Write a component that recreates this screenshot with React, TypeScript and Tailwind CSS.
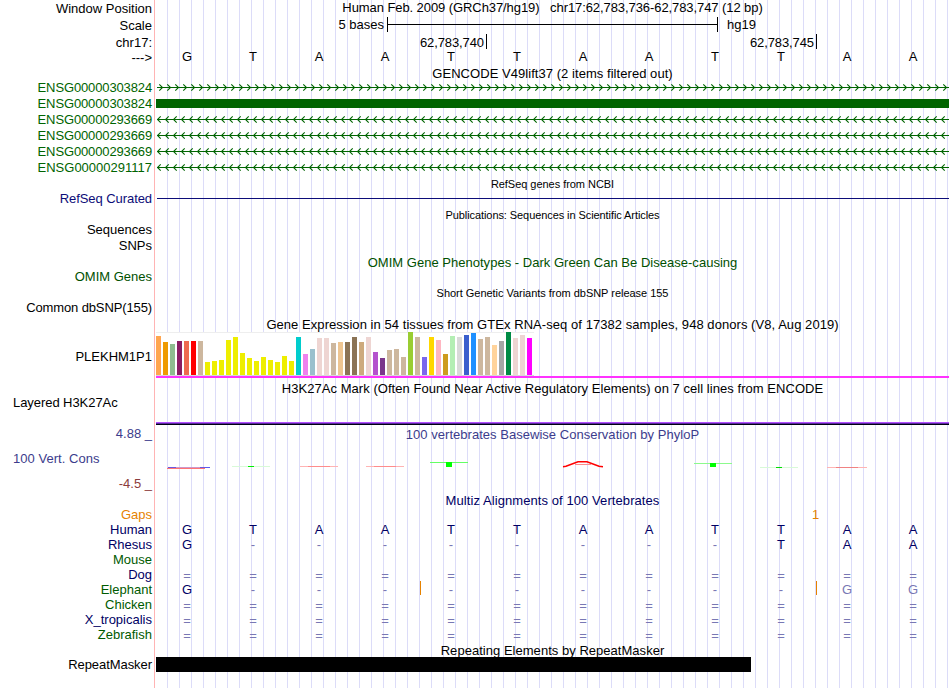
const labels = [
  { text: 'Window Position', className: 'mt-px' },
  { text: 'Scale', className: 'mt-0.5' },
  { text: 'chr17:', className: 'mt-0.5' },
  { text: '--->', className: '' },
  { text: 'ENSG00000303824', className: 'mt-[15px] tracking-[-0.13px] text-[#006400]' },
  { text: 'ENSG00000303824', className: 'mt-px tracking-[-0.13px] text-[#006400]' },
  { text: 'ENSG00000293669', className: 'mt-px tracking-[-0.13px] text-[#006400]' },
  { text: 'ENSG00000293669', className: 'mt-px tracking-[-0.13px] text-[#006400]' },
  { text: 'ENSG00000293669', className: 'mt-px tracking-[-0.13px] text-[#006400]' },
  { text: 'ENSG00000291117', className: 'mt-px text-[#006400]' },
  { text: 'RefSeq Curated', className: 'mt-4 tracking-[-0.07px] text-[#0c0c78]' },
  { text: 'Sequences', className: 'mt-4' },
  { text: 'SNPs', className: 'mt-px' },
  { text: 'OMIM Genes', className: 'mt-4 text-[#005000]' },
  { text: 'Common dbSNP(155)', className: 'mt-4 tracking-[-0.12px]' },
  { text: 'PLEKHM1P1', className: 'mt-[34px]' },
  { text: 'Layered H3K27Ac', className: 'mt-[31px] self-start pl-[13px] tracking-[-0.06px]' },
  { text: '4.88 _', className: 'mt-4 text-[#3c3c8c]' },
  { text: '100 Vert. Cons', className: 'mt-2.5 self-start pl-[13px] tracking-[0.04px] text-[#3c3c8c]' },
  { text: '-4.5 _', className: 'mt-2.5 text-[#8c3c3c]' },
  { text: 'Gaps', className: 'mt-4 text-[#e68200]' },
  { text: 'Human', className: 'text-[#000064]' },
  { text: 'Rhesus', className: 'text-[#000064]' },
  { text: 'Mouse', className: 'text-[#005a00]' },
  { text: 'Dog', className: 'text-[#000064]' },
  { text: 'Elephant', className: 'text-[#005a00]' },
  { text: 'Chicken', className: 'text-[#005a00]' },
  { text: 'X_tropicalis', className: 'text-[#000064]' },
  { text: 'Zebrafish', className: 'text-[#005a00]' },
  { text: 'RepeatMasker', className: 'mt-[15px] tracking-[-0.06px]' },
]

const tissues: [number, string][] = [
  [39, '#ffa54f'], [33, '#ee9a00'], [31, '#8fbc8f'], [34, '#8b1c62'], [34, '#ee6a50'], [34, '#ff0000'],
  [34, '#cdb79e'], [13, '#eeee00'], [14, '#eeee00'], [15, '#eeee00'], [35, '#eeee00'], [38, '#eeee00'],
  [22, '#eeee00'], [17, '#eeee00'], [14, '#eeee00'], [18, '#eeee00'], [15, '#eeee00'], [13, '#eeee00'],
  [19, '#eeee00'], [14, '#eeee00'], [38, '#00cdcd'], [21, '#ee82ee'], [26, '#9ac0cd'], [37, '#eed5d2'],
  [37, '#eed5d2'], [32, '#cdb79e'], [33, '#eec591'], [33, '#8b7355'], [38, '#8b7355'], [33, '#cdaa7d'],
  [38, '#eed5d2'], [23, '#b452cd'], [17, '#7a378b'], [25, '#cdb79e'], [26, '#cdb79e'], [18, '#cdb79e'],
  [43, '#9acd32'], [38, '#cdb79e'], [18, '#7a67ee'], [38, '#ffd700'], [35, '#ffb6c1'], [21, '#cd9b1d'],
  [39, '#b4eeb4'], [38, '#d9d9d9'], [40, '#3a5fcd'], [42, '#1e90ff'], [36, '#cdb79e'], [38, '#cdb79e'],
  [30, '#ffd39b'], [34, '#a6a6a6'], [43, '#008b45'], [37, '#eed5d2'], [40, '#eed5d2'], [37, '#ff00ff'],
]

// Mouse has no alignment in this window
const alignments = ['GTAATTAATTAA', 'G--------TAA', '', '============', 'G---------gg', '============', '============', '============']

function Bases({ seq, className }: { seq: string; className: string }) {
  return (
    <div className={`-ml-0.5 grid h-[15px] w-[792px] grid-cols-12 text-center ${className}`}>
      {seq.split('').map((base, i) => (
        <span key={i} className={base === '=' ? 'pt-px text-[#7878b4]' : /[-g]/.test(base) ? 'text-[#7878b4]' : ''}>
          {base.toUpperCase()}
        </span>
      ))}
    </div>
  )
}

function Genes() {
  return (
    <svg className="mt-0.5 block h-[93px] w-[793px]" viewBox="156 83 793 93">
      <defs>
        <pattern id="fwd" x="157" y="83" width="8" height="9" patternUnits="userSpaceOnUse">
          <path d="M2.3 1.3 L5.5 4.5 L2.3 7.7" fill="none" stroke="#006400" strokeWidth="1.1" />
        </pattern>
        <pattern id="rev" x="157" y="115" width="8" height="16" patternUnits="userSpaceOnUse">
          <path d="M3.7 1.3 L0.5 4.5 L3.7 7.7" fill="none" stroke="#006400" strokeWidth="1.1" />
        </pattern>
      </defs>
      <rect x="157" y="83" width="792" height="9" fill="url(#fwd)" />
      <rect x="157" y="87" width="792" height="1" fill="#006400" />
      <rect x="156" y="99" width="793" height="9" fill="#006400" />
      <rect x="157" y="115" width="792" height="61" fill="url(#rev)" />
      {[119, 135, 151, 167].map((y) => (
        <rect key={y} x="157" y={y} width="792" height="1" fill="#006400" />
      ))}
    </svg>
  )
}

function Conservation() {
  return (
    <svg className="block h-[51px] w-[793px]" viewBox="156 442 793 51">
      <path d="M168 467.5H176M200 467.5H210" stroke="#5a5af0" />
      <path d="M176 467.5H200" stroke="#c8a0d8" />
      <path d="M167 468.4H205" stroke="#ff6464" />
      <path d="M232 466.5H270" stroke="#d8fad8" />
      <path d="M248 466.5H254" stroke="#00f000" />
      <path d="M300 466.5H338M366 466.5H404" stroke="#ffb4b4" />
      <path d="M308 466.5H330M374 466.5H396" stroke="#ff8c8c" />
      <path d="M430 462.5H468" stroke="#64ff64" />
      <path d="M446 462H452V467H446Z" fill="#00ff00" />
      <path d="M563 466.7L566 466.3L578 461.8H587L599 466.3L603 466.7" fill="none" stroke="#ff0000" strokeWidth="1.6" />
      <path d="M575 464.5H591" stroke="#ff8c8c" />
      <path d="M694 463.5H732" stroke="#8cfa8c" />
      <path d="M710 463H716V467H710Z" fill="#00ff00" />
      <path d="M760 467.5H798" stroke="#d8fad8" />
      <path d="M776 467.5H782" stroke="#00dc00" />
      <path d="M827 467.5H867" stroke="#ffb4b4" />
      <path d="M836 467.5H858" stroke="#f08282" />
    </svg>
  )
}

export default function App() {
  return (
    <div className="flex h-[688px] w-[950px] overflow-hidden bg-white font-['Liberation_Sans',Arial,sans-serif] text-[13px] leading-[15px] whitespace-pre text-black">
      <div className="flex w-[154px] shrink-0 flex-col items-end pr-0.5">
        {labels.map((label, i) => (
          <div key={i} className={`h-[15px] shrink-0 ${label.className}`}>
            {label.text}
          </div>
        ))}
      </div>
      <div className="mr-px w-px shrink-0 bg-[#ffb4b4]" />

      <div className="w-[793px] shrink-0 bg-[repeating-linear-gradient(90deg,transparent_0,transparent_11px,#dcdcf8_11px,#dcdcf8_12px)]">
        <div className="h-[15px] text-center tracking-[-0.08px]">
          Human Feb. 2009 (GRCh37/hg19)   chr17:62,783,736-62,783,747 (12 bp)
        </div>
        <div className="mt-0.5 flex h-[15px]">
          <span className="w-[228px] text-right">5 bases</span>
          <div className="ml-[3px] flex w-[331px] items-center border-x border-black">
            <div className="h-px w-full bg-black" />
          </div>
          <span className="ml-[9px]">hg19</span>
        </div>
        <div className="mt-0.5 flex h-[15px]">
          <span className="w-[331px] border-r border-black pt-px pr-0.5 text-right tracking-[-0.1px]">62,783,740</span>
          <span className="w-[330px] border-r border-black pt-px pr-0.5 text-right tracking-[-0.1px]">62,783,745</span>
        </div>
        <Bases seq="GTAATTAATTAA" className="" />
        <div className="mt-0.5 h-[15px] text-center tracking-[0.05px]">GENCODE V49lift37 (2 items filtered out)</div>
        <Genes />

        <div className="mt-0.5 h-[13px] text-center text-[11px] leading-[13px] tracking-[-0.04px]">
          RefSeq genes from NCBI
        </div>
        <div className="mt-[7px] ml-px h-px bg-[#0c0c78]" />
        <div className="mt-2.5 h-[13px] text-center text-[11px] leading-[13px] tracking-[-0.08px]">
          Publications: Sequences in Scientific Articles
        </div>
        <div className="mt-[33px] h-[15px] text-center tracking-[0.02px] text-[#005000]">
          OMIM Gene Phenotypes - Dark Green Can Be Disease-causing
        </div>
        <div className="mt-[17px] h-[13px] text-center text-[11px] leading-[13px] tracking-[-0.03px]">
          Short Genetic Variants from dbSNP release 155
        </div>

        <div className="mt-[17px] h-[15px] text-center tracking-[0.055px]">
          Gene Expression in 54 tissues from GTEx RNA-seq of 17382 samples, 948 donors (V8, Aug 2019)
        </div>
        <div className="flex h-11 w-[378px] items-end gap-0.5 border-y border-t-[#eeeeee] border-b-[#d8d8d8] bg-white">
          {tissues.map(([height, color], i) => (
            <div key={i} className="w-[5px] shrink-0" style={{ height, backgroundColor: color }} />
          ))}
        </div>
        <div className="h-0.5 bg-[#ff32ff]" />

        <div className="mt-[3px] h-[15px] text-center tracking-[0.045px]">
          H3K27Ac Mark (Often Found Near Active Regulatory Elements) on 7 cell lines from ENCODE
        </div>
        <div className="mt-[26px] h-px bg-[#b450ff]" />
        <div className="h-px bg-[#5a28a0]" />
        <div className="h-px bg-[#000014]" />

        <div className="mt-0.5 h-[15px] text-center tracking-[0.03px] text-[#3c3c8c]">
          100 vertebrates Basewise Conservation by PhyloP
        </div>
        <Conservation />

        <div className="h-3.5 text-center tracking-[0.08px] text-[#000064]">Multiz Alignments of 100 Vertebrates</div>
        <div className="h-[15px] pl-[656px] text-[#e68200]">1</div>
        {alignments.map((seq, i) => (
          <div key={i} className="relative h-[15px]">
            <Bases seq={seq} className="text-[#000064]" />
            {i === 4 && (
              <>
                <div className="absolute top-[-1px] left-[264px] h-3.5 w-px bg-[#e68200]" />
                <div className="absolute top-[-1px] left-[660px] h-3.5 w-px bg-[#e68200]" />
              </>
            )}
          </div>
        ))}

        <div className="mt-px h-3.5 text-center tracking-[0.03px]">Repeating Elements by RepeatMasker</div>
        <div className="h-[15px] w-[595px] bg-black" />
      </div>
    </div>
  )
}
